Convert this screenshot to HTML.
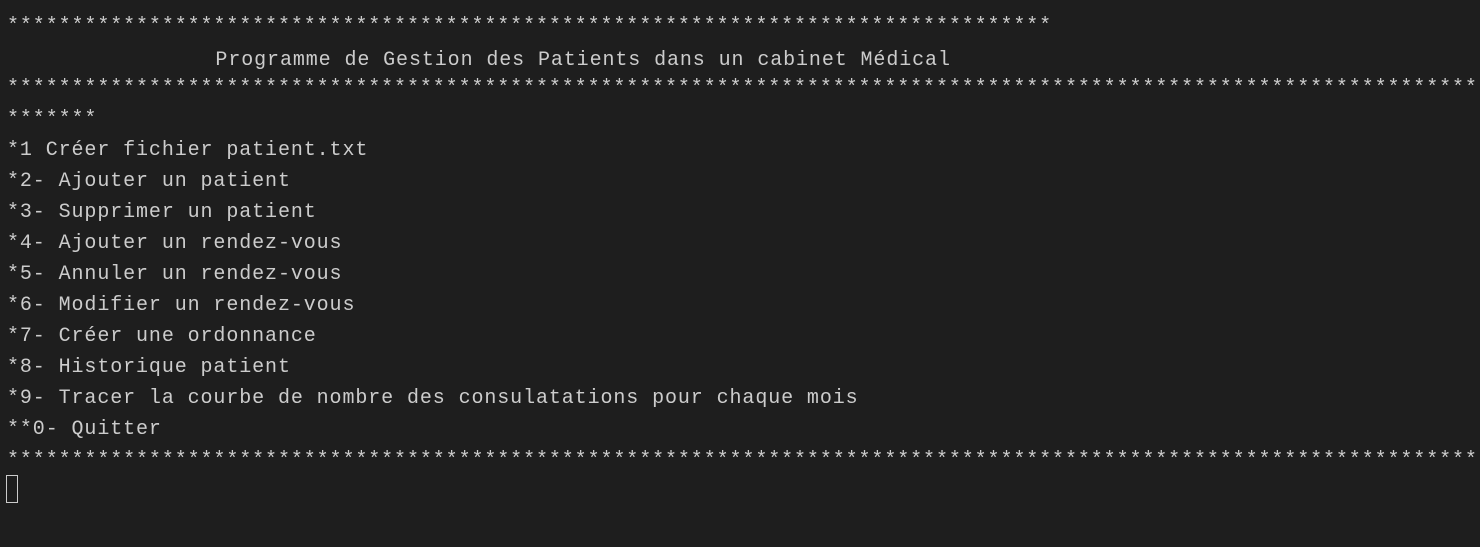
<!DOCTYPE html>
<html><head><meta charset="utf-8"><style>
html,body{margin:0;padding:0;background:#1e1e1e;width:1480px;height:547px;overflow:hidden}
pre{margin:0;position:absolute;left:7px;top:11px;font-family:"Liberation Mono",monospace;font-size:20px;letter-spacing:0.9px;line-height:31px;color:#cccccc;white-space:pre}
.t{position:relative;top:3px;left:2px}
.cur{position:absolute;left:6px;top:475px;width:12px;height:28px;border:1px solid #cccccc;box-sizing:border-box}
</style></head><body>
<pre>*********************************************************************************
<span class="t">                Programme de Gestion des Patients dans un cabinet Médical</span>
******************************************************************************************************************
*******
*1 Créer fichier patient.txt
*2- Ajouter un patient
*3- Supprimer un patient
*4- Ajouter un rendez-vous
*5- Annuler un rendez-vous
*6- Modifier un rendez-vous
*7- Créer une ordonnance
*8- Historique patient
*9- Tracer la courbe de nombre des consulatations pour chaque mois
**0- Quitter
******************************************************************************************************************</pre>
<div class="cur"></div>
</body></html>
